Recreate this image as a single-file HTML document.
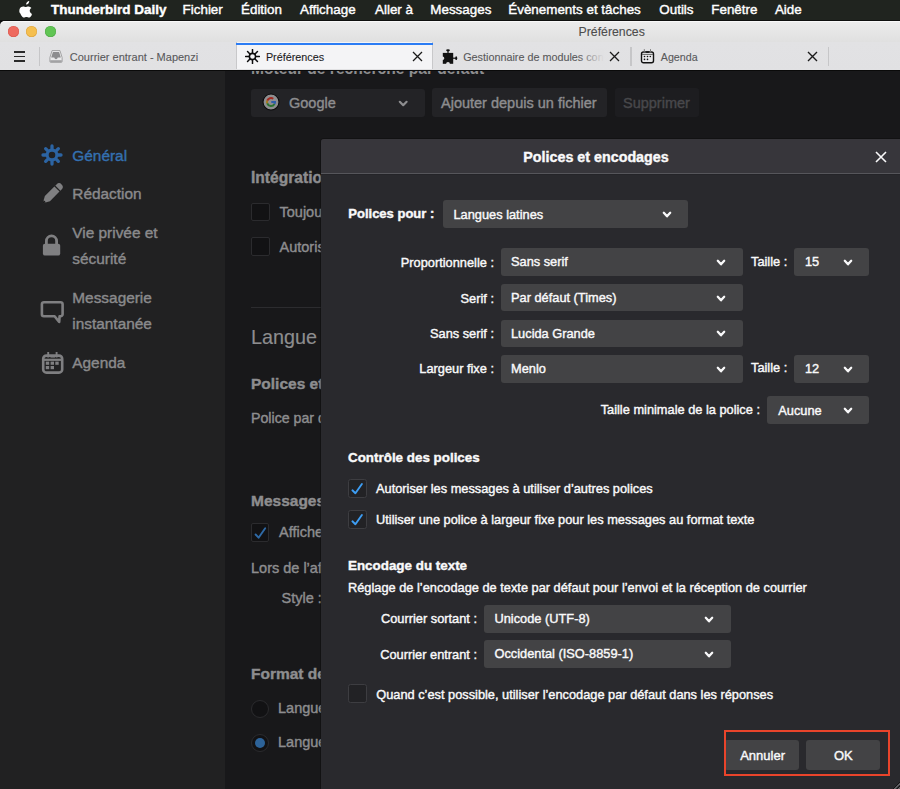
<!DOCTYPE html><html><head><meta charset="utf-8"><style>
html,body{margin:0;padding:0;width:900px;height:789px;overflow:hidden;background:#19191b;}
body{position:relative;font-family:"Liberation Sans",sans-serif;}
.t{position:absolute;white-space:nowrap;-webkit-text-stroke:0.4px currentColor;}
.b{position:absolute;}
</style></head><body>
<div class="b" style="left:0.00px;top:0.00px;width:900.00px;height:22.00px;background:#20241f;"></div>
<div class="b" style="left:0.00px;top:20.00px;width:900.00px;height:2.00px;background:#0e0f0e;"></div>
<svg class="b" style="left:19px;top:0.8px" width="15" height="17.2" viewBox="0 0 170 200"><path fill="#fff" d="M150.4 155.4c-2.6 6-5.7 11.6-9.2 16.7-4.9 6.9-8.9 11.7-12 14.4-4.8 4.4-9.9 6.7-15.4 6.8-4 0-8.7-1.1-14.2-3.4-5.5-2.2-10.6-3.3-15.2-3.3-4.9 0-10.1 1.1-15.7 3.3-5.6 2.3-10.1 3.4-13.5 3.5-5.2.2-10.5-2.1-15.7-7-3.3-2.9-7.5-7.9-12.5-14.9-5.4-7.5-9.8-16.3-13.2-26.3C3.2 135.5 1.4 125.1 1.4 115c0-11.5 2.5-21.5 7.5-29.8 3.9-6.7 9.1-12 15.6-15.9 6.5-3.9 13.6-5.9 21.1-6 4.1 0 9.5 1.3 16.3 3.8 6.7 2.5 11 3.8 12.9 3.8 1.4 0 6.3-1.5 14.6-4.5 7.8-2.8 14.4-4 19.8-3.5 14.6 1.2 25.6 6.9 32.9 17.3-13.1 7.9-19.5 19-19.4 33.2.1 11.1 4.1 20.3 12 27.6 3.6 3.4 7.6 6 12 7.9-1 2.8-2 5.5-3.1 8.1zM116.8 4.3c0 8.7-3.2 16.8-9.5 24.3-7.6 8.9-16.9 14.1-26.9 13.3-.1-1-.2-2.1-.2-3.3 0-8.3 3.6-17.2 10.1-24.5 3.2-3.7 7.3-6.8 12.3-9.2C107.5 2.5 112.2 1.2 116.6 1c.1 1.1.2 2.2.2 3.3z"/></svg>
<div class="t" style="left:51.00px;top:3.37px;font-size:13.5px;line-height:13.5px;font-weight:700;color:#ffffff;">Thunderbird Daily</div>
<div class="t" style="left:182.60px;top:3.46px;font-size:13.4px;line-height:13.4px;font-weight:400;color:#ffffff;">Fichier</div>
<div class="t" style="left:241.00px;top:3.46px;font-size:13.4px;line-height:13.4px;font-weight:400;color:#ffffff;">Édition</div>
<div class="t" style="left:300.00px;top:3.46px;font-size:13.4px;line-height:13.4px;font-weight:400;color:#ffffff;">Affichage</div>
<div class="t" style="left:375.00px;top:3.46px;font-size:13.4px;line-height:13.4px;font-weight:400;color:#ffffff;">Aller à</div>
<div class="t" style="left:430.30px;top:3.46px;font-size:13.4px;line-height:13.4px;font-weight:400;color:#ffffff;">Messages</div>
<div class="t" style="left:508.30px;top:3.46px;font-size:13.4px;line-height:13.4px;font-weight:400;color:#ffffff;">Évènements et tâches</div>
<div class="t" style="left:659.30px;top:3.46px;font-size:13.4px;line-height:13.4px;font-weight:400;color:#ffffff;">Outils</div>
<div class="t" style="left:711.30px;top:3.46px;font-size:13.4px;line-height:13.4px;font-weight:400;color:#ffffff;">Fenêtre</div>
<div class="t" style="left:774.90px;top:3.46px;font-size:13.4px;line-height:13.4px;font-weight:400;color:#ffffff;">Aide</div>
<div class="b" style="left:0;top:21px;width:900px;height:49px;background:linear-gradient(#ececec,#e0e0e0 21px,#e2e2e4 21px,#e1e1e3);border-radius:5px 0 0 0;box-shadow:inset 0 1px 0 #f8f8f8;"></div>
<div class="b" style="left:7.80px;top:26px;width:11px;height:11px;border-radius:50%;background:#ee6a5f;box-shadow:inset 0 0 0 0.5px #d9564c;"></div>
<div class="b" style="left:26.30px;top:26px;width:11px;height:11px;border-radius:50%;background:#f5bf4f;box-shadow:inset 0 0 0 0.5px #dba23c;"></div>
<div class="b" style="left:45.00px;top:26px;width:11px;height:11px;border-radius:50%;background:#61c554;box-shadow:inset 0 0 0 0.5px #4ea846;"></div>
<div class="t" style="left:578.50px;top:25.99px;font-size:12.3px;line-height:12.3px;font-weight:400;color:#4d4d4d;-webkit-text-stroke:0.1px currentColor;">Préférences</div>
<div class="b" style="left:0.00px;top:70.00px;width:900.00px;height:1.00px;background:#0a0a0a;"></div>
<div class="b" style="left:14.00px;top:51.10px;width:11.20px;height:1.60px;background:#2a2a2a;"></div>
<div class="b" style="left:14.00px;top:55.60px;width:11.20px;height:1.60px;background:#2a2a2a;"></div>
<div class="b" style="left:14.00px;top:60.30px;width:11.20px;height:1.60px;background:#2a2a2a;"></div>
<div class="b" style="left:38.80px;top:47.00px;width:1.40px;height:19.00px;background:#c6c6c8;"></div>
<svg class="b" style="left:49px;top:49px" width="14" height="14.5" viewBox="0 0 16 16"><path d="M3.5 1.5 h9 l2.5 8 v4.5 q0 1 -1 1 h-12 q-1 0 -1 -1 v-4.5 z" fill="#e9e9ea" stroke="#9a9a9c" stroke-width="1"/><path d="M4.5 3 h7 l2 6.5 h-3.5 q-0.5 2 -2 2 q-1.5 0 -2 -2 h-3.5 z" fill="#8d8d8f"/><path d="M1.5 13.5 h13" stroke="#8a8a8c" stroke-width="1.5"/></svg>
<div class="t" style="left:69.80px;top:51.69px;font-size:11px;line-height:11px;font-weight:400;color:#59595b;-webkit-text-stroke:0.1px currentColor;">Courrier entrant - Mapenzi</div>
<div class="b" style="left:236px;top:42px;width:197px;height:27px;background:#f4f4f6;border-left:1px solid #c8c8ca;border-right:1px solid #c8c8ca;box-sizing:border-box;"></div>
<div class="b" style="left:236.00px;top:42.50px;width:197.00px;height:2.00px;background:#2b7cf4;"></div>
<svg class="b" style="left:245px;top:49px" width="15" height="15" viewBox="0 0 15 15"><circle cx="7.5" cy="7.5" r="3.1" fill="none" stroke="#0c0c0d" stroke-width="1.6"/><path d="M11.10 7.50 L14.50 7.50 M10.05 10.05 L12.45 12.45 M7.50 11.10 L7.50 14.50 M4.95 10.05 L2.55 12.45 M3.90 7.50 L0.50 7.50 M4.95 4.95 L2.55 2.55 M7.50 3.90 L7.50 0.50 M10.05 4.95 L12.45 2.55 " stroke="#0c0c0d" stroke-width="1.5" stroke-linecap="round"/></svg>
<div class="t" style="left:265.90px;top:51.86px;font-size:10.8px;line-height:10.8px;font-weight:400;color:#1c1c1e;-webkit-text-stroke:0.1px currentColor;">Préférences</div>
<svg class="b" style="left:411.80px;top:51.20px" width="11" height="11" viewBox="-1 -1 11 11"><path d="M0 0 L9 9 M9 0 L0 9" stroke="#1a1a1a" stroke-width="1.3" fill="none"/></svg>
<svg class="b" style="left:441px;top:48px" width="18" height="18" viewBox="0 0 18 18"><rect x="1.8" y="4.9" width="10.4" height="10.9" fill="#121212"/><circle cx="1.6" cy="10.3" r="1.7" fill="#e1e1e3"/><circle cx="7" cy="16" r="1.9" fill="#e1e1e3"/><ellipse cx="7" cy="2.3" rx="1.9" ry="1.1" fill="#121212"/><rect x="6.4" y="2.5" width="1.2" height="3" fill="#121212"/><ellipse cx="15.2" cy="10.2" rx="1" ry="1.9" fill="#121212"/><rect x="11" y="9.6" width="4" height="1.2" fill="#121212"/></svg>
<div class="t" style="left:463.20px;top:51.86px;font-size:10.8px;line-height:10.8px;font-weight:400;color:#59595b;-webkit-text-stroke:0.1px currentColor;">Gestionnaire de modules con</div>
<div class="b" style="left:578px;top:48px;width:26px;height:16px;background:linear-gradient(90deg,rgba(225,225,227,0),#e1e1e3);"></div>
<svg class="b" style="left:609.10px;top:51.00px" width="11" height="11" viewBox="-1 -1 11 11"><path d="M0 0 L9 9 M9 0 L0 9" stroke="#1a1a1a" stroke-width="1.3" fill="none"/></svg>
<div class="b" style="left:630.40px;top:47.00px;width:1.40px;height:19.00px;background:#c6c6c8;"></div>
<svg class="b" style="left:640px;top:48px" width="15" height="16" viewBox="0 0 15 16"><rect x="1.5" y="4" width="12" height="10.8" rx="2" fill="#e8e8ea" stroke="#111" stroke-width="1.4"/><path d="M2 6.4 h11" stroke="#555" stroke-width="0.9"/><path d="M4.3 1.2 v3.2 M10.5 1.2 v3.2" stroke="#777" stroke-width="1"/><rect x="6.1" y="3.3" width="2.8" height="1.5" fill="#111"/><g fill="#111"><circle cx="4.5" cy="8.5" r="0.8"/><circle cx="7.5" cy="8.5" r="0.8"/><circle cx="10.3" cy="8.5" r="0.8"/><circle cx="4.5" cy="11.4" r="0.8"/><circle cx="7.5" cy="11.4" r="0.8"/></g></svg>
<div class="t" style="left:660.80px;top:51.94px;font-size:10.7px;line-height:10.7px;font-weight:400;color:#59595b;-webkit-text-stroke:0.1px currentColor;">Agenda</div>
<svg class="b" style="left:806.70px;top:51.40px" width="11" height="11" viewBox="-1 -1 11 11"><path d="M0 0 L9 9 M9 0 L0 9" stroke="#1a1a1a" stroke-width="1.4" fill="none"/></svg>
<div class="b" style="left:827.60px;top:47.00px;width:1.40px;height:19.00px;background:#c6c6c8;"></div>
<div class="b" style="left:0.00px;top:71.00px;width:225.00px;height:718.00px;background:#212122;"></div>
<div class="b" style="left:225.00px;top:71.00px;width:675.00px;height:718.00px;background:#18181a;"></div>
<div class="b" style="left:0;top:71px;width:900px;height:12px;overflow:hidden;">
<div class="t" style="left:251.00px;top:-10.01px;font-size:15.6px;line-height:15.6px;font-weight:700;color:#8d8d8f;-webkit-text-stroke:0;">Moteur de recherche par défaut</div>
</div>
<div class="b" style="left:251.00px;top:88.50px;width:173.50px;height:28.00px;background:#232326;border-radius:3px;"></div>
<svg class="b" style="left:261.3px;top:91.8px" width="20" height="20" viewBox="0 0 20 20"><circle cx="10" cy="10" r="8" fill="#8e8e90" stroke="#0b0b0c" stroke-width="1.1"/><g fill="none" stroke-width="2"><path d="M12.29 6.72 A4 4 0 0 0 6.24 8.63" stroke="#a2291f"/><path d="M6.24 8.63 A4 4 0 0 0 6.24 11.37" stroke="#a57a1d"/><path d="M6.24 11.37 A4 4 0 0 0 13.46 12" stroke="#2c7232"/><path d="M13.46 12 A4 4 0 0 0 14 10 M15 10 H10.3" stroke="#2f5eab"/></g></svg>
<div class="t" style="left:289.00px;top:95.93px;font-size:14.5px;line-height:14.5px;font-weight:400;color:#8d8d8f;">Google</div>
<svg class="b" style="left:396.80px;top:99.10px" width="12.4" height="8.8" viewBox="-2 -2 12.4 8.8"><path d="M0.8 0.8 L4.2 4.2 L7.6000000000000005 0.8" fill="none" stroke="#8d8d8f" stroke-width="2.2" stroke-linecap="round" stroke-linejoin="round"/></svg>
<div class="b" style="left:432.00px;top:88.00px;width:174.50px;height:29.00px;background:#232326;border-radius:3px;"></div>
<div class="t" style="left:441.00px;top:96.03px;font-size:14.5px;line-height:14.5px;font-weight:400;color:#8d8d8f;">Ajouter depuis un fichier</div>
<div class="b" style="left:614.50px;top:88.00px;width:84.00px;height:29.00px;background:#1d1d20;border-radius:3px;"></div>
<div class="t" style="left:623.00px;top:96.03px;font-size:14.5px;line-height:14.5px;font-weight:400;color:#48484b;">Supprimer</div>
<div class="t" style="left:251.00px;top:170.49px;font-size:15.6px;line-height:15.6px;font-weight:700;color:#8d8d8f;">Intégration</div>
<div class="b" style="left:251.00px;top:202.50px;width:18.50px;height:18.80px;background:#121214;border:1px solid #2b2b2e;box-sizing:border-box;border-radius:2px;"></div>
<div class="t" style="left:279.50px;top:204.83px;font-size:14.5px;line-height:14.5px;font-weight:400;color:#8d8d8f;">Toujours</div>
<div class="b" style="left:251.00px;top:237.30px;width:18.50px;height:18.80px;background:#121214;border:1px solid #2b2b2e;box-sizing:border-box;border-radius:2px;"></div>
<div class="t" style="left:279.50px;top:239.63px;font-size:14.5px;line-height:14.5px;font-weight:400;color:#8d8d8f;">Autoriser</div>
<div class="b" style="left:251.00px;top:307.00px;width:649.00px;height:1.00px;background:#2c2c2f;"></div>
<div class="t" style="left:251.00px;top:327.74px;font-size:19.8px;line-height:19.8px;font-weight:400;color:#8d8d8f;-webkit-text-stroke:0.15px currentColor;">Langue et apparence</div>
<div class="t" style="left:251.00px;top:375.88px;font-size:15.5px;line-height:15.5px;font-weight:700;color:#8d8d8f;">Polices et couleurs</div>
<div class="t" style="left:251.00px;top:410.68px;font-size:14.2px;line-height:14.2px;font-weight:400;color:#8d8d8f;">Police par défaut</div>
<div class="t" style="left:251.00px;top:493.48px;font-size:15.5px;line-height:15.5px;font-weight:700;color:#8d8d8f;">Messages</div>
<div class="b" style="left:251.00px;top:523.40px;width:18.30px;height:18.30px;background:#121214;border:1px solid #2b2b2e;box-sizing:border-box;border-radius:2px;"></div>
<svg class="b" style="left:251px;top:523px" width="19" height="19" viewBox="0 0 19 19"><path d="M4.6 11.5 L7.6 14.7 L14.2 5.2" fill="none" stroke="#2f6aa6" stroke-width="1.9" stroke-linecap="round" stroke-linejoin="round"/></svg>
<div class="t" style="left:279.00px;top:525.33px;font-size:14.5px;line-height:14.5px;font-weight:400;color:#8d8d8f;">Afficher</div>
<div class="t" style="left:251.00px;top:560.73px;font-size:14.5px;line-height:14.5px;font-weight:400;color:#8d8d8f;">Lors de l’affichage</div>
<div class="t" style="left:281.50px;top:590.93px;font-size:14.5px;line-height:14.5px;font-weight:400;color:#8d8d8f;">Style :</div>
<div class="t" style="left:251.00px;top:665.88px;font-size:15.5px;line-height:15.5px;font-weight:700;color:#8d8d8f;">Format de</div>
<div class="b" style="left:251px;top:699.5px;width:18px;height:18px;border-radius:50%;background:#121214;border:1px solid #2b2b2e;box-sizing:border-box;"></div>
<div class="t" style="left:278.00px;top:701.13px;font-size:14.5px;line-height:14.5px;font-weight:400;color:#8d8d8f;">Langue</div>
<div class="b" style="left:251px;top:734px;width:18px;height:18px;border-radius:50%;background:#121214;border:1px solid #2b2b2e;box-sizing:border-box;"></div>
<div class="b" style="left:255px;top:738px;width:10px;height:10px;border-radius:50%;background:#2d6399;"></div>
<div class="t" style="left:278.00px;top:735.43px;font-size:14.5px;line-height:14.5px;font-weight:400;color:#8d8d8f;">Langue</div>
<svg class="b" style="left:40.8px;top:144.1px" width="22" height="22" viewBox="0 0 22 22"><circle cx="11" cy="11" r="4.85" fill="none" stroke="#2c64a3" stroke-width="3.1"/><path d="M17.20 11.00 L20.00 11.00 M15.38 15.38 L17.36 17.36 M11.00 17.20 L11.00 20.00 M6.62 15.38 L4.64 17.36 M4.80 11.00 L2.00 11.00 M6.62 6.62 L4.64 4.64 M11.00 4.80 L11.00 2.00 M15.38 6.62 L17.36 4.64 " stroke="#2c64a3" stroke-width="3.3" stroke-linecap="round"/></svg>
<div class="t" style="left:72.30px;top:147.66px;font-size:15.4px;line-height:15.4px;font-weight:400;color:#3470b0;">Général</div>
<svg class="b" style="left:35.4px;top:176.6px" width="34" height="34" viewBox="-17 -17 34 34"><g transform="rotate(-45)"><path d="M-13 0 L-6.5 -3.6 H7 V3.6 H-6.5 Z" fill="#7f7f81"/><path d="M8.3 -3.6 H10 A3.6 3.6 0 0 1 10 3.6 H8.3 Z" fill="#7f7f81"/><path d="M-13 0 L-10.2 -1.5 V1.5 Z" fill="#101010"/></g></svg>
<div class="t" style="left:72.30px;top:185.76px;font-size:15.4px;line-height:15.4px;font-weight:400;color:#8a8a8c;">Rédaction</div>
<svg class="b" style="left:42px;top:234px" width="19" height="23" viewBox="0 0 19 23"><path d="M4.4 10 V7 a5.1 5.1 0 0 1 10.2 0 V10" fill="none" stroke="#7f7f81" stroke-width="2.8"/><rect x="0.9" y="9.7" width="17.3" height="11.8" rx="2" fill="#7f7f81"/></svg>
<div class="t" style="left:72.30px;top:224.56px;font-size:15.4px;line-height:15.4px;font-weight:400;color:#8a8a8c;">Vie privée et</div>
<div class="t" style="left:72.30px;top:251.06px;font-size:15.4px;line-height:15.4px;font-weight:400;color:#8a8a8c;">sécurité</div>
<svg class="b" style="left:40px;top:299.5px" width="25" height="24" viewBox="0 0 25 24"><path d="M3.9 2.2 H20.6 a2 2 0 0 1 2 2 V14.2 a2 2 0 0 1 -2 2 H19.6 L19.2 22 L14.6 16.2 H3.9 a2 2 0 0 1 -2 -2 V4.2 a2 2 0 0 1 2 -2 z" fill="none" stroke="#7f7f81" stroke-width="2.6" stroke-linejoin="round"/></svg>
<div class="t" style="left:72.30px;top:290.36px;font-size:15.4px;line-height:15.4px;font-weight:400;color:#8a8a8c;">Messagerie</div>
<div class="t" style="left:72.30px;top:316.16px;font-size:15.4px;line-height:15.4px;font-weight:400;color:#8a8a8c;">instantanée</div>
<svg class="b" style="left:41px;top:351px" width="23" height="23" viewBox="0 0 23 23"><rect x="2.2" y="4.6" width="19" height="17" rx="3.2" fill="none" stroke="#7f7f81" stroke-width="2.6"/><path d="M2.2 8.8 h19" stroke="#7f7f81" stroke-width="2.2"/><path d="M7.2 1 v5.5 M15.6 1 v5.5" stroke="#7f7f81" stroke-width="1.9"/><rect x="9.5" y="4.4" width="4.5" height="2.2" fill="#7f7f81"/><g fill="#7f7f81"><rect x="4.8" y="10.6" width="3.4" height="3.2"/><rect x="9.6" y="10.6" width="3.4" height="3.2"/><rect x="14.3" y="10.6" width="3.4" height="3.2"/><rect x="4.8" y="15" width="3.4" height="3.2"/><rect x="9.6" y="15" width="3.4" height="3.2"/></g></svg>
<div class="t" style="left:72.30px;top:354.96px;font-size:15.4px;line-height:15.4px;font-weight:400;color:#8a8a8c;">Agenda</div>
<div class="b" style="left:321px;top:139px;width:600px;height:700px;background:#29292d;border-radius:3px;box-shadow:0 0 0 1px rgba(0,0,0,0.25);"></div>
<div class="b" style="left:321.00px;top:139.00px;width:579.00px;height:34.00px;background:#37363b;border-radius:3px 0 0 0;"></div>
<div class="b" style="left:321.00px;top:173.00px;width:579.00px;height:1.00px;background:#56565b;"></div>
<div class="b" style="left:321.00px;top:174.00px;width:579.00px;height:1.00px;background:#242428;"></div>
<div class="t" style="left:523.30px;top:149.50px;font-size:14.3px;line-height:14.3px;font-weight:700;color:#f9f9fa;">Polices et encodages</div>
<svg class="b" style="left:875.30px;top:150.60px" width="12" height="12" viewBox="-1 -1 12 12"><path d="M0 0 L10 10 M10 0 L0 10" stroke="#f9f9fa" stroke-width="1.6" fill="none"/></svg>
<div class="t" style="left:348.30px;top:207.00px;font-size:13px;line-height:13px;font-weight:700;color:#f9f9fa;">Polices pour :</div>
<div class="b" style="left:442.50px;top:200.20px;width:245.50px;height:28.00px;background:#434345;border-radius:3px;"></div>
<div class="t" style="left:453.50px;top:208.66px;font-size:12.8px;line-height:12.8px;font-weight:400;color:#f9f9fa;">Langues latines</div>
<svg class="b" style="left:660.60px;top:210.25px" width="12.0" height="8.9" viewBox="-2 -2 12.0 8.9"><path d="M0.8 0.8 L4.0 4.300000000000001 L7.2 0.8" fill="none" stroke="#f9f9fa" stroke-width="2.3" stroke-linecap="round" stroke-linejoin="round"/></svg>
<div class="t" style="right:406.00px;top:256.96px;font-size:12.8px;line-height:12.8px;font-weight:400;color:#f9f9fa;">Proportionnelle :</div>
<div class="b" style="left:500.50px;top:248.10px;width:242.00px;height:27.60px;background:#434345;border-radius:3px;"></div>
<div class="t" style="left:511.00px;top:256.36px;font-size:12.8px;line-height:12.8px;font-weight:400;color:#f9f9fa;">Sans serif</div>
<svg class="b" style="left:715.00px;top:257.95px" width="12.0" height="8.9" viewBox="-2 -2 12.0 8.9"><path d="M0.8 0.8 L4.0 4.300000000000001 L7.2 0.8" fill="none" stroke="#f9f9fa" stroke-width="2.3" stroke-linecap="round" stroke-linejoin="round"/></svg>
<div class="t" style="left:751.00px;top:256.16px;font-size:12.8px;line-height:12.8px;font-weight:400;color:#f9f9fa;">Taille :</div>
<div class="b" style="left:794.00px;top:248.10px;width:75.00px;height:27.60px;background:#434345;border-radius:3px;"></div>
<div class="t" style="left:805.00px;top:256.36px;font-size:12.8px;line-height:12.8px;font-weight:400;color:#f9f9fa;">15</div>
<svg class="b" style="left:841.70px;top:257.95px" width="12.0" height="8.9" viewBox="-2 -2 12.0 8.9"><path d="M0.8 0.8 L4.0 4.300000000000001 L7.2 0.8" fill="none" stroke="#f9f9fa" stroke-width="2.3" stroke-linecap="round" stroke-linejoin="round"/></svg>
<div class="t" style="right:406.00px;top:292.66px;font-size:12.8px;line-height:12.8px;font-weight:400;color:#f9f9fa;">Serif :</div>
<div class="b" style="left:500.50px;top:283.80px;width:242.00px;height:27.60px;background:#434345;border-radius:3px;"></div>
<div class="t" style="left:511.00px;top:292.06px;font-size:12.8px;line-height:12.8px;font-weight:400;color:#f9f9fa;">Par défaut (Times)</div>
<svg class="b" style="left:715.00px;top:293.65px" width="12.0" height="8.9" viewBox="-2 -2 12.0 8.9"><path d="M0.8 0.8 L4.0 4.300000000000001 L7.2 0.8" fill="none" stroke="#f9f9fa" stroke-width="2.3" stroke-linecap="round" stroke-linejoin="round"/></svg>
<div class="t" style="right:406.00px;top:327.56px;font-size:12.8px;line-height:12.8px;font-weight:400;color:#f9f9fa;">Sans serif :</div>
<div class="b" style="left:500.50px;top:319.50px;width:242.00px;height:27.60px;background:#434345;border-radius:3px;"></div>
<div class="t" style="left:511.00px;top:327.76px;font-size:12.8px;line-height:12.8px;font-weight:400;color:#f9f9fa;">Lucida Grande</div>
<svg class="b" style="left:715.00px;top:329.35px" width="12.0" height="8.9" viewBox="-2 -2 12.0 8.9"><path d="M0.8 0.8 L4.0 4.300000000000001 L7.2 0.8" fill="none" stroke="#f9f9fa" stroke-width="2.3" stroke-linecap="round" stroke-linejoin="round"/></svg>
<div class="t" style="right:406.00px;top:362.76px;font-size:12.8px;line-height:12.8px;font-weight:400;color:#f9f9fa;">Largeur fixe :</div>
<div class="b" style="left:500.50px;top:355.10px;width:242.00px;height:27.60px;background:#434345;border-radius:3px;"></div>
<div class="t" style="left:511.00px;top:363.36px;font-size:12.8px;line-height:12.8px;font-weight:400;color:#f9f9fa;">Menlo</div>
<svg class="b" style="left:715.00px;top:364.95px" width="12.0" height="8.9" viewBox="-2 -2 12.0 8.9"><path d="M0.8 0.8 L4.0 4.300000000000001 L7.2 0.8" fill="none" stroke="#f9f9fa" stroke-width="2.3" stroke-linecap="round" stroke-linejoin="round"/></svg>
<div class="t" style="left:751.00px;top:361.96px;font-size:12.8px;line-height:12.8px;font-weight:400;color:#f9f9fa;">Taille :</div>
<div class="b" style="left:794.00px;top:355.10px;width:75.00px;height:27.60px;background:#434345;border-radius:3px;"></div>
<div class="t" style="left:805.00px;top:363.36px;font-size:12.8px;line-height:12.8px;font-weight:400;color:#f9f9fa;">12</div>
<svg class="b" style="left:841.70px;top:364.95px" width="12.0" height="8.9" viewBox="-2 -2 12.0 8.9"><path d="M0.8 0.8 L4.0 4.300000000000001 L7.2 0.8" fill="none" stroke="#f9f9fa" stroke-width="2.3" stroke-linecap="round" stroke-linejoin="round"/></svg>
<div class="t" style="right:140.00px;top:404.26px;font-size:12.8px;line-height:12.8px;font-weight:400;color:#f9f9fa;">Taille minimale de la police :</div>
<div class="b" style="left:767.00px;top:396.20px;width:102.00px;height:28.00px;background:#434345;border-radius:3px;"></div>
<div class="t" style="left:778.30px;top:404.66px;font-size:12.8px;line-height:12.8px;font-weight:400;color:#f9f9fa;">Aucune</div>
<svg class="b" style="left:842.00px;top:406.25px" width="12.0" height="8.9" viewBox="-2 -2 12.0 8.9"><path d="M0.8 0.8 L4.0 4.300000000000001 L7.2 0.8" fill="none" stroke="#f9f9fa" stroke-width="2.3" stroke-linecap="round" stroke-linejoin="round"/></svg>
<div class="t" style="left:348.00px;top:450.86px;font-size:13.4px;line-height:13.4px;font-weight:700;color:#f9f9fa;">Contrôle des polices</div>
<div class="b" style="left:348.20px;top:478.50px;width:18.80px;height:19.20px;background:#222225;border:1.2px solid #3d3d41;box-sizing:border-box;border-radius:2.5px;"></div>
<svg class="b" style="left:348.2px;top:478.5px" width="19" height="19" viewBox="0 0 19 19"><path d="M4.4 11.3 L7.4 14.2 L13.9 5.0" fill="none" stroke="#3d9df3" stroke-width="1.9" stroke-linecap="round" stroke-linejoin="round"/></svg>
<div class="t" style="left:376.00px;top:482.76px;font-size:12.8px;line-height:12.8px;font-weight:400;color:#f9f9fa;">Autoriser les messages à utiliser d’autres polices</div>
<div class="b" style="left:348.20px;top:510.30px;width:18.80px;height:19.20px;background:#222225;border:1.2px solid #3d3d41;box-sizing:border-box;border-radius:2.5px;"></div>
<svg class="b" style="left:348.2px;top:510.3px" width="19" height="19" viewBox="0 0 19 19"><path d="M4.4 11.3 L7.4 14.2 L13.9 5.0" fill="none" stroke="#3d9df3" stroke-width="1.9" stroke-linecap="round" stroke-linejoin="round"/></svg>
<div class="t" style="left:376.00px;top:514.16px;font-size:12.8px;line-height:12.8px;font-weight:400;color:#f9f9fa;">Utiliser une police à largeur fixe pour les messages au format texte</div>
<div class="t" style="left:348.00px;top:558.56px;font-size:13.4px;line-height:13.4px;font-weight:700;color:#f9f9fa;">Encodage du texte</div>
<div class="t" style="left:348.00px;top:582.36px;font-size:12.8px;line-height:12.8px;font-weight:400;color:#f9f9fa;">Réglage de l’encodage de texte par défaut pour l’envoi et la réception de courrier</div>
<div class="t" style="right:423.00px;top:613.16px;font-size:12.8px;line-height:12.8px;font-weight:400;color:#f9f9fa;">Courrier sortant :</div>
<div class="b" style="left:484.20px;top:604.60px;width:246.80px;height:28.10px;background:#434345;border-radius:3px;"></div>
<div class="t" style="left:494.50px;top:613.11px;font-size:12.8px;line-height:12.8px;font-weight:400;color:#f9f9fa;">Unicode (UTF-8)</div>
<svg class="b" style="left:703.10px;top:614.70px" width="12.0" height="8.9" viewBox="-2 -2 12.0 8.9"><path d="M0.8 0.8 L4.0 4.300000000000001 L7.2 0.8" fill="none" stroke="#f9f9fa" stroke-width="2.3" stroke-linecap="round" stroke-linejoin="round"/></svg>
<div class="t" style="right:423.00px;top:648.86px;font-size:12.8px;line-height:12.8px;font-weight:400;color:#f9f9fa;">Courrier entrant :</div>
<div class="b" style="left:484.20px;top:640.00px;width:246.80px;height:28.00px;background:#434345;border-radius:3px;"></div>
<div class="t" style="left:494.50px;top:648.46px;font-size:12.8px;line-height:12.8px;font-weight:400;color:#f9f9fa;">Occidental (ISO-8859-1)</div>
<svg class="b" style="left:703.10px;top:650.05px" width="12.0" height="8.9" viewBox="-2 -2 12.0 8.9"><path d="M0.8 0.8 L4.0 4.300000000000001 L7.2 0.8" fill="none" stroke="#f9f9fa" stroke-width="2.3" stroke-linecap="round" stroke-linejoin="round"/></svg>
<div class="b" style="left:348.20px;top:684.30px;width:18.80px;height:19.20px;background:#222225;border:1.2px solid #3d3d41;box-sizing:border-box;border-radius:2.5px;"></div>
<div class="t" style="left:376.20px;top:688.86px;font-size:12.8px;line-height:12.8px;font-weight:400;color:#f9f9fa;">Quand c’est possible, utiliser l’encodage par défaut dans les réponses</div>
<div class="b" style="left:724.00px;top:740.00px;width:75.30px;height:30.00px;background:#434345;border-radius:3px;"></div>
<div class="t" style="left:762.60px;top:749.00px;font-size:13px;line-height:13px;font-weight:400;color:#f9f9fa;transform:translateX(-50%);">Annuler</div>
<div class="b" style="left:806.30px;top:740.00px;width:74.00px;height:30.00px;background:#434345;border-radius:3px;"></div>
<div class="t" style="left:843.30px;top:749.00px;font-size:13px;line-height:13px;font-weight:400;color:#f9f9fa;transform:translateX(-50%);">OK</div>
<div class="b" style="left:724px;top:730px;width:166px;height:46px;border:2px solid #e9442b;box-sizing:border-box;"></div>
<svg class="b" style="left:886px;top:775px" width="14" height="14" viewBox="0 0 14 14"><path d="M14.5 6.5 L6.5 14.5" stroke="#111" stroke-width="1"/><path d="M14.5 8 L8 14.5" stroke="#707074" stroke-width="1.2"/><path d="M14.5 10.5 L10.5 14.5" stroke="#111" stroke-width="1"/><path d="M14.5 12 L12 14.5" stroke="#707074" stroke-width="1.2"/></svg>
</body></html>
